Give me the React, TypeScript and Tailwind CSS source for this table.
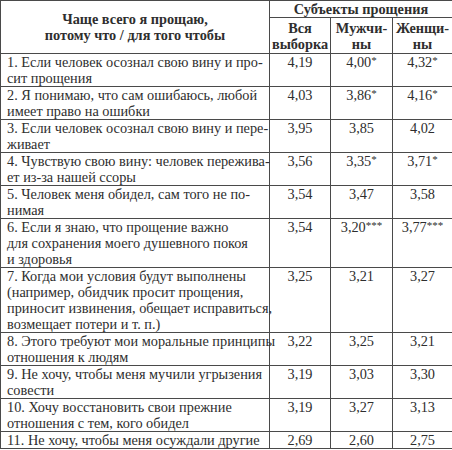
import React from "react";

// строки таблицы: текст (уже разбит на строки как в книге) и значения
interface Row {
  lines: string[];
  all: string;
  men: string;
  women: string;
}

const rows: Row[] = [
  { lines: ["1. Если человек осознал свою вину и про-", "сит прощения"], all: "4,19", men: "4,00*", women: "4,32*" },
  { lines: ["2. Я понимаю, что сам ошибаюсь, любой", "имеет право на ошибки"], all: "4,03", men: "3,86*", women: "4,16*" },
  { lines: ["3. Если человек осознал свою вину и пере-", "живает"], all: "3,95", men: "3,85", women: "4,02" },
  { lines: ["4. Чувствую свою вину: человек пережива-", "ет из-за нашей ссоры"], all: "3,56", men: "3,35*", women: "3,71*" },
  { lines: ["5. Человек меня обидел, сам того не по-", "нимая"], all: "3,54", men: "3,47", women: "3,58" },
  {
    lines: ["6. Если я знаю, что прощение важно", "для сохранения моего душевного покоя", "и здоровья"],
    all: "3,54",
    men: "3,20***",
    women: "3,77***",
  },
  {
    lines: [
      "7. Когда мои условия будут выполнены",
      "(например, обидчик просит прощения,",
      "приносит извинения, обещает исправиться,",
      "возмещает потери и т. п.)",
    ],
    all: "3,25",
    men: "3,21",
    women: "3,27",
  },
  { lines: ["8. Этого требуют мои моральные принципы", "отношения к людям"], all: "3,22", men: "3,25", women: "3,21" },
  { lines: ["9. Не хочу, чтобы меня мучили угрызения", "совести"], all: "3,19", men: "3,03", women: "3,30" },
  { lines: ["10. Хочу восстановить свои прежние", "отношения с тем, кого обидел"], all: "3,19", men: "3,27", women: "3,13" },
  { lines: ["11. Не хочу, чтобы меня осуждали другие"], all: "2,69", men: "2,60", women: "2,75" },
];

// число со звёздочками значимости
function Value({ v }: { v: string }) {
  const i = v.indexOf("*");
  if (i < 0) return <>{v}</>;
  return (
    <>
      {v.slice(0, i)}
      <span className="relative -top-[3px] text-[11px]">{v.slice(i)}</span>
    </>
  );
}

export default function App() {
  const cell = "border border-[#4a4a4a] px-[6px] py-0 align-top";
  const num = "border border-[#4a4a4a] p-0 align-top text-center";
  const sub = "border border-[#4a4a4a] p-0 pt-[2px] pb-[1px] text-center font-bold";

  return (
    <div className="w-[452px] h-[450px] bg-white overflow-hidden">
      <table className="w-[452px] table-fixed border-collapse text-[#2e2e2e] font-['Liberation_Serif',serif] text-[14.3px] leading-4">
        <colgroup>
          <col className="w-[269px]" />
          <col className="w-[61px]" />
          <col className="w-[62px]" />
          <col className="w-[60px]" />
        </colgroup>
        <thead>
          <tr className="h-[17px]">
            <th rowSpan={2} className="border border-[#4a4a4a] px-[6px] align-middle text-center font-bold">
              Чаще всего я прощаю,
              <br />
              потому что / для того чтобы
            </th>
            <th colSpan={3} className="border border-[#4a4a4a] p-0 text-center font-bold">
              Субъекты прощения
            </th>
          </tr>
          <tr>
            <th className={sub}>
              Вся
              <br />
              выборка
            </th>
            <th className={sub}>
              Мужчи-
              <br />
              ны
            </th>
            <th className={sub}>
              Женщи-
              <br />
              ны
            </th>
          </tr>
        </thead>
        <tbody>
          {rows.map((r, idx) => (
            <tr key={idx}>
              <td className={cell}>
                {r.lines.map((l, j) => (
                  <div key={j} className="whitespace-nowrap">
                    {l}
                  </div>
                ))}
              </td>
              <td className={num}>
                <Value v={r.all} />
              </td>
              <td className={num}>
                <Value v={r.men} />
              </td>
              <td className={num}>
                <Value v={r.women} />
              </td>
            </tr>
          ))}
        </tbody>
      </table>
    </div>
  );
}
